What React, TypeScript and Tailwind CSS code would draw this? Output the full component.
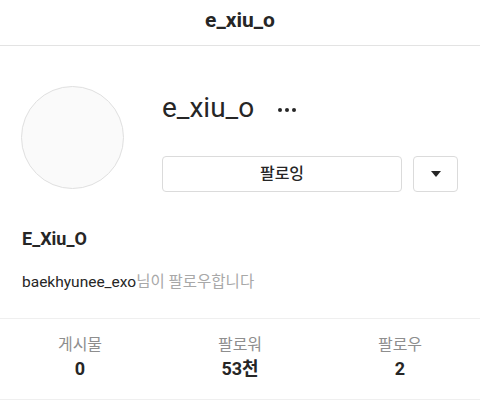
import React from "react";

const font = { fontFamily: "Roboto, 'Noto Sans CJK KR', sans-serif" };

const Stat = ({ label, value }: { label: string; value: string }) => (
  <div className="flex flex-1 flex-col items-center">
    <span className="text-[16px] leading-[22px] text-[#8e8e8e]">{label}</span>
    <span className="mt-[2px] text-[18px] leading-[22px] font-bold text-[#262626]">{value}</span>
  </div>
);

export default function App() {
  return (
    <div className="w-[480px] h-[403px] bg-white text-[#262626] overflow-hidden" style={font}>
      <header className="h-[46px] flex items-center justify-center border-b border-[#e3e3e3]">
        <h1 className="text-[21px] font-bold leading-6 pb-[6px]">e_xiu_o</h1>
      </header>

      <section className="flex pl-[21px] pt-[40px]">
        <div className="w-[103px] h-[103px] rounded-full bg-[#fafafa] border border-[#e0e0e0]" />
        <div className="ml-[38px] flex flex-col">
          <div className="flex items-center h-[40px] mt-[2px]">
            <span className="text-[28px] font-normal leading-[40px]">e_xiu_o</span>
            <span className="ml-[24px] mt-[4px] flex gap-[3px]">
              <span className="w-[4px] h-[4px] rounded-full bg-[#262626]" />
              <span className="w-[4px] h-[4px] rounded-full bg-[#262626]" />
              <span className="w-[4px] h-[4px] rounded-full bg-[#262626]" />
            </span>
          </div>
          <div className="flex mt-[28px] gap-[11px]">
            <button className="w-[240px] h-[36px] rounded-[4px] border border-[#dbdbdb] text-[16px] font-medium text-[#262626]">
              팔로잉
            </button>
            <button className="w-[45px] h-[36px] rounded-[4px] border border-[#dbdbdb] flex items-center justify-center">
              <svg width="10" height="6" viewBox="0 0 10 6">
                <path d="M0 0h10L5 6z" fill="#262626" />
              </svg>
            </button>
          </div>
        </div>
      </section>

      <section className="px-[22px] pt-[36px]">
        <div className="text-[18px] font-bold leading-[22px]">E_Xiu_O</div>
        <div className="mt-[22px] text-[15.5px] leading-[20px]">
          <span className="text-[#262626]">baekhyunee_exo</span>
          <span className="text-[#a8a8a8]">님이 팔로우합니다</span>
        </div>
      </section>

      <section className="mt-[26px] border-t border-b border-[#efefef] h-[82px] flex items-center pb-[4px]">
        <Stat label="게시물" value="0" />
        <Stat label="팔로워" value="53천" />
        <Stat label="팔로우" value="2" />
      </section>
    </div>
  );
}
